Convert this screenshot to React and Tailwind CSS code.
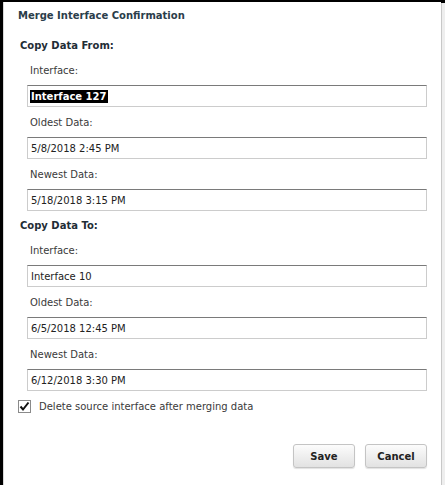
import React from "react";

const Field = ({ label, value, selected }) => (
  <div className="pl-[9px]">
    <div className="pl-[3px] text-[10px] leading-[16px] text-[#3a3a3a]">{label}</div>
    <div className="mt-[6px] mb-[8px] h-[22px] w-[400px] border border-[#cccccc] border-t-[#7a7a7a] bg-white pl-[2px] flex items-center text-[10px] text-[#222]">
      {selected ? (
        <span className="bg-black text-white font-bold px-[1px] leading-[13px]">{value}</span>
      ) : (
        <span className="px-[1px]">{value}</span>
      )}
    </div>
  </div>
);

const Section = ({ title, fields }) => (
  <div>
    <div className="pl-[2px] text-[10px] font-bold leading-[16px] text-[#1f2d36]">{title}</div>
    <div className="mt-[9px]">
      {fields.map((f) => (
        <Field key={f.label} {...f} />
      ))}
    </div>
  </div>
);

const Button = ({ children }) => (
  <button className="h-[24px] w-[62px] rounded-[3px] border border-[#c4c4c4] bg-gradient-to-b from-[#fcfcfc] to-[#e2e2e2] text-[10px] font-bold text-[#222] shadow-[0_1px_1px_rgba(0,0,0,0.12)]">
    {children}
  </button>
);

export default function App() {
  return (
    <div
      className="flex h-[485px] w-[445px] bg-black pt-[2px] pl-[3px] overflow-hidden"
      style={{ fontFamily: '"DejaVu Sans", Verdana, sans-serif' }}
    >
      <div className="flex-1 bg-white border-l border-[#d8d8d8] pl-[14px]">
        <div className="mt-[6px] text-[10px] font-bold leading-[16px] text-[#2a3d4a]">
          Merge Interface Confirmation
        </div>
        <div className="mt-[14px]">
          <Section
            title="Copy Data From:"
            fields={[
              { label: "Interface:", value: "Interface 127", selected: true },
              { label: "Oldest Data:", value: "5/8/2018 2:45 PM" },
              { label: "Newest Data:", value: "5/18/2018 3:15 PM" },
            ]}
          />
        </div>
        <div className="mt-[-1px]">
          <Section
            title="Copy Data To:"
            fields={[
              { label: "Interface:", value: "Interface 10" },
              { label: "Oldest Data:", value: "6/5/2018 12:45 PM" },
              { label: "Newest Data:", value: "6/12/2018 3:30 PM" },
            ]}
          />
        </div>
        <label className="mt-[3px] flex items-center gap-[8px] text-[10px] text-[#3a3a3a]">
          <span className="flex h-[13px] w-[13px] items-center justify-center border border-[#8a8a8a] bg-white">
            <svg width="11" height="11" viewBox="0 0 11 11">
              <path d="M1.5 5.5 L4 8.5 L9.5 1.5" fill="none" stroke="#111" strokeWidth="2" />
            </svg>
          </span>
          Delete source interface after merging data
        </label>
        <div className="mt-[30px] flex justify-end gap-[10px] pr-[14px]">
          <Button>Save</Button>
          <Button>Cancel</Button>
        </div>
      </div>
      <div className="w-[4px] border-l border-[#c8c8c8] bg-[#eeeeee] mt-[1px]" />
    </div>
  );
}
